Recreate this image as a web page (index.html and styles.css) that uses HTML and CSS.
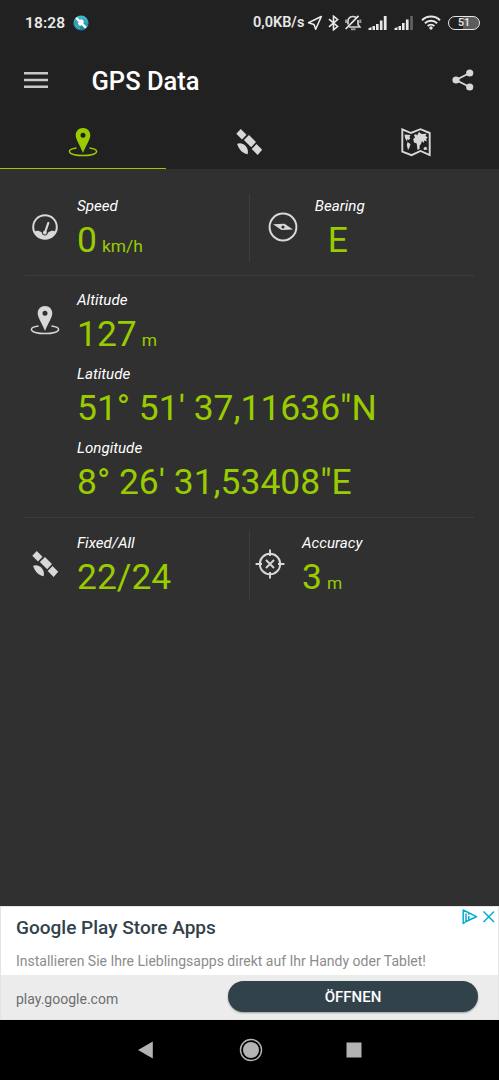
FILE: index.html
```html
<!DOCTYPE html>
<html lang="de">

<head>
    <meta charset="UTF-8">
    <meta name="viewport" content="width=device-width, initial-scale=1.0">
    <title>GPS Data</title>
    <link rel="stylesheet" href="styles.css">
</head>

<body>
    <!-- shared icons -->
    <svg class="defs">
        <symbol id="pin" viewBox="0 0 30 30">
            <path fill="currentColor" fill-rule="evenodd" d="M15 1C10.700 1 7.700 4.200 7.700 8.200C7.700 12.500 12.200 18.500 15 26C17.800 18.500 22.300 12.500 22.300 8.200C22.300 4.200 19.300 1 15 1ZM15 5.700a2.500 2.500 0 1 1 0 5a2.500 2.500 0 1 1 0-5Z" />
            <path fill="none" stroke="currentColor" stroke-width="1.500" d="M8.500 21C4 21.600 1.400 22.900 1.400 24.500C1.400 26.900 7.500 28.600 15 28.600S28.600 26.900 28.600 24.500C28.600 22.900 26 21.600 21.500 21" />
        </symbol>
        <symbol id="satellite" viewBox="0 0 30 30">
            <g fill="currentColor">
                <path d="M6.800 2L12.500 7.700L8 12.500L2.300 6.700ZM15 7.900L22 15L17.200 20.200L9.900 13ZM22.500 16.900L28.200 22.700L23.600 27.900L17.700 22Z" />
                <path d="M3.200 16.800C6 15.600 9.200 16.300 11.500 18.800C13.700 21.200 14.500 24.300 13.600 27.300C10.800 26.800 8.300 25.300 6.600 23.300C5 21.400 3.700 19.200 3.200 16.800Z" />
            </g>
        </symbol>
    </svg>

    <div class="statusbar">
        <span class="clock">18:28</span>
        <svg class="app-badge" width="16" height="16" viewBox="0 0 16 16">
            <defs>
                <linearGradient id="sky" x1="0" y1="0" x2="0" y2="1">
                    <stop offset="0" stop-color="#43bfd3" />
                    <stop offset="1" stop-color="#197b96" />
                </linearGradient>
            </defs>
            <circle cx="8" cy="8" r="7.600" fill="url(#sky)" />
            <path fill="#fff" d="M2.300 3.500L4 1.900L7 5L8.500 4L11 6.600L10.200 8.200L13.800 11.800L12 13.500L8.500 10L7 11L4.700 8.700L5.600 7Z" />
            <path fill="none" stroke="#8fd0dc" stroke-width=".6" d="M3 9.500C3 12 5 13.500 7 13.500M4.500 10C4.700 11 5.500 12 6.500 12" />
        </svg>
        <span class="rate">0,0KB/s</span>
        <svg class="i-nav" width="16" height="16" viewBox="0 0 16 16">
            <path fill="none" stroke="#e8e8e8" stroke-width="1.600" stroke-linejoin="round" d="M14.300 1.500L1.500 7.700L7 9.500L8.700 14.300Z" />
        </svg>
        <svg class="i-bt" width="11" height="16" viewBox="0 0 11 16">
            <path fill="none" stroke="#e8e8e8" stroke-width="1.600" d="M1 4.200L9.600 11.500L5.500 14.800V1.200L9.600 4.500L1 11.800" />
        </svg>
        <svg class="i-bell" width="18" height="16" viewBox="0 0 18 16">
            <path fill="none" stroke="#d8d8d8" stroke-width="1.700" d="M4 9.500V6C4 3 6.500 1.500 9 1.500C10 1.500 11 1.800 12 2.500M14 5V9.500L15.800 12H5" />
            <path fill="none" stroke="#999" stroke-width="2" d="M2 4.500V8M16.300 4.500V8M7 14.300H11.500" />
            <path stroke="#e8e8e8" stroke-width="1.700" d="M1.700 14L14.500 .8" />
        </svg>
        <svg class="i-sig" width="20" height="14" viewBox="0 0 20 14">
            <path fill="#e8e8e8" d="M.5 14v-1.700l3-1.300V14ZM4.500 10h2.500V14H4.500ZM8 8h2.600V14H8ZM11.900 4.500h2.600v9.500H11.900ZM15.800 0h2.800v14h-2.800Z" />
        </svg>
        <svg class="i-sig2" width="20" height="14" viewBox="0 0 20 14">
            <path fill="#e8e8e8" d="M.5 14v-1.700l3-1.300V14ZM4.500 10h2.500V14H4.500ZM8 7h2.600V14H8ZM11.900 3.500h2.700v10.500H11.900Z" />
            <path fill="#666" d="M16.300 0h2.500v14h-2.500Z" />
        </svg>
        <svg class="i-wifi" width="20" height="15" viewBox="0 0 20 15">
            <path fill="none" stroke="#e8e8e8" stroke-width="2" d="M1 5.200C6 .2 14 .2 19 5.200M3.900 8.200C7.300 4.900 12.700 4.900 16.100 8.200M6.700 11C8.600 9.200 11.400 9.200 13.300 11" />
            <circle cx="10" cy="13" r="1.700" fill="#e8e8e8" />
        </svg>
        <span class="battery">51</span>
    </div>

    <header class="toolbar">
        <svg width="24" height="17" viewBox="0 0 24 17">
            <path stroke="#c8c8c8" stroke-width="2.400" d="M0 1.200H24M0 8H24M0 14.800H24" />
        </svg>
        <h1>GPS Data</h1>
        <svg class="share" width="22" height="22" viewBox="0 0 22 22">
            <path fill="none" stroke="#d6d6d6" stroke-width="1.900" d="M17.700 4L4 11L17.700 18" />
            <g fill="#d6d6d6">
                <circle cx="4" cy="11" r="3.600" />
                <circle cx="17.700" cy="4" r="3.600" />
                <circle cx="17.700" cy="18" r="3.600" />
            </g>
        </svg>
    </header>

    <nav class="tabs">
        <div class="tab active"><svg class="icon"><use href="#pin" /></svg></div>
        <div class="tab"><svg class="icon"><use href="#satellite" /></svg></div>
        <div class="tab">
            <svg class="icon" viewBox="0 0 30 30">
                <path fill="none" stroke="currentColor" stroke-width="1.900" d="M1.300 2.300L10 6L19.500 2.200L28.700 6V28L19.500 24L10.500 28.200L1.300 24.600Z" />
                <path fill="currentColor" d="M3.500 7.500L9.500 8L8.500 10L9.300 11.500L7.500 13L6.500 12L6 14.500L4 11ZM6.500 15L9.500 17L8.500 20.500L7 23L5.800 18Z" />
                <path fill="currentColor" d="M13 8L15 7L16 8.500L18 5L20.500 7L25.500 6.700L24.500 9L26.800 10.500L25 12L26 14.500L23.500 13.500L22.500 16L21 14L20 17L18.700 18.500L18.500 22L16.500 23L15.700 16.500L13 15.500L12.200 12L14 10.500ZM22.500 21L25 19.500L26.500 22.500L23 23Z" />
            </svg>
        </div>
    </nav>

    <main class="content">
        <section class="row split">
            <div class="cell">
                <svg class="icon" viewBox="0 0 30 30">
                    <circle cx="15" cy="15" r="11.800" fill="none" stroke="currentColor" stroke-width="2" />
                    <path fill="currentColor" d="M4.500 19.500C7 18 9 18.500 12 20.500H18C21 18.500 23 18 25.500 19.500C23.500 25 19.500 27 15 27S6.500 25 4.500 19.500Z" />
                    <path stroke="#303030" stroke-width="6" stroke-linecap="round" d="M14.900 20.500L16.300 16.500" />
                    <path stroke="currentColor" stroke-width="2.200" stroke-linecap="round" d="M15 20.500L18.300 11" />
                    <circle cx="14.800" cy="20.700" r="1.900" fill="currentColor" />
                </svg>
                <div class="data">
                    <p class="label">Speed</p>
                    <p class="value">0<small>km/h</small></p>
                </div>
            </div>
            <div class="cell bearing">
                <svg class="icon" viewBox="0 0 30 30">
                    <circle cx="15" cy="15" r="13.400" fill="none" stroke="currentColor" stroke-width="2" />
                    <path fill="currentColor" d="M5 12.300L16.500 11.800L25 17.500L13.500 18Z" />
                    <circle cx="15" cy="15" r="1.600" fill="#303030" />
                </svg>
                <div class="data">
                    <p class="label">Bearing</p>
                    <p class="value">E</p>
                </div>
            </div>
        </section>

        <section class="row position">
            <svg class="icon"><use href="#pin" /></svg>
            <div class="data">
                <p class="label">Altitude</p>
                <p class="value">127<small>m</small></p>
                <p class="label">Latitude</p>
                <p class="value">51° 51' 37,11636"N</p>
                <p class="label">Longitude</p>
                <p class="value">8° 26' 31,53408"E</p>
            </div>
        </section>

        <section class="row split">
            <div class="cell">
                <svg class="icon"><use href="#satellite" /></svg>
                <div class="data">
                    <p class="label">Fixed/All</p>
                    <p class="value">22/24</p>
                </div>
            </div>
            <div class="cell accuracy">
                <svg class="icon" viewBox="0 0 30 30">
                    <g fill="none" stroke="currentColor" stroke-width="1.900">
                        <circle cx="15" cy="15" r="10.200" />
                        <path d="M15 .6V7M15 23V29.400M.6 15H7M23 15H29.400M11 11L19 19M19 11L11 19" />
                    </g>
                </svg>
                <div class="data">
                    <p class="label">Accuracy</p>
                    <p class="value">3<small>m</small></p>
                </div>
            </div>
        </section>
    </main>

    <aside class="ad">
        <div class="ad-text">
            <h2>Google Play Store Apps</h2>
            <p>Installieren Sie Ihre Lieblingsapps direkt auf Ihr Handy oder Tablet!</p>
            <svg class="ad-choices" width="34" height="16" viewBox="0 0 34 16">
                <g fill="none" stroke="#00aecd" stroke-width="1.500">
                    <path stroke-linejoin="round" d="M4 12.500L1.200 14.500V1L14.500 7.700L4 12.500V4.500" />
                    <path d="M6.800 7V11M6.800 4.200V5.700M21.500 2.500L32 13M32 2.500L21.500 13" />
                </g>
            </svg>
        </div>
        <div class="ad-action">
            <span>play.google.com</span>
            <button>ÖFFNEN</button>
        </div>
    </aside>

    <footer class="navbar">
        <svg width="16" height="18" viewBox="0 0 16 18"><path fill="#b4b4b4" d="M15.800 .5V17.500L1 9Z" /></svg>
        <svg class="home" width="24" height="24" viewBox="0 0 24 24">
            <circle cx="12" cy="12" r="10.500" fill="none" stroke="#b4b4b4" stroke-width="1.400" />
            <circle cx="12" cy="12" r="8" fill="#b4b4b4" />
        </svg>
        <svg width="16" height="16" viewBox="0 0 16 16"><path fill="#b4b4b4" d="M.5 .5h15v15H.5Z" /></svg>
    </footer>
</body>

</html>
```
FILE: styles.css
```css
* {
    box-sizing: border-box;
    margin: 0;
    padding: 0;
}

body {
    width: 499px;
    height: 1080px;
    display: flex;
    flex-direction: column;
    background: #303030;
    color: #fff;
    font-family: Roboto, "Liberation Sans", sans-serif;
    overflow: hidden;
}

svg {
    display: block;
    flex-shrink: 0;
}

.defs {
    position: absolute;
    width: 0;
    height: 0;
}

.icon {
    width: 30px;
    height: 30px;
    color: #d8d8d8;
}

/* status bar */
.statusbar {
    height: 45px;
    display: flex;
    align-items: center;
    padding-left: 25px;
    background: #212121;
    color: #e8e8e8;
    font-size: 15.5px;
    font-weight: 600;
    white-space: nowrap;
}

.clock {
    width: 48px;
    letter-spacing: .1px;
}

.rate {
    width: 53px;
    margin-left: 164px;
    font-size: 14.5px;
    line-height: 20px;
}

.i-nav {
    margin-left: 1px;
}

.i-bt {
    margin-left: 5px;
}

.i-bell {
    margin-left: 5px;
}

.i-sig {
    margin-left: 6px;
}

.i-sig2 {
    margin-left: 6px;
}

.i-wifi {
    margin-left: 7px;
}

.battery {
    width: 32px;
    height: 14px;
    margin-left: 7px;
    border: 1.5px solid #e8e8e8;
    border-radius: 7px;
    background: linear-gradient(90deg, #212121 45%, #5c5c5c 45%);
    font-size: 10.5px;
    line-height: 12px;
    text-align: center;
}

/* title bar */
.toolbar {
    height: 70px;
    display: flex;
    align-items: center;
    padding: 0 25px 0 24px;
    background: #212121;
}

.toolbar h1 {
    margin-left: 43.5px;
    padding-top: 2px;
    font-size: 25.5px;
    font-weight: 500;
    line-height: 30px;
}

.toolbar .share {
    margin-left: auto;
}

/* tabs */
.tabs {
    height: 54px;
    display: flex;
    background: #212121;
}

.tab {
    flex: 1;
    display: flex;
    justify-content: center;
    padding-top: 12px;
    border-bottom: 1px solid transparent;
}

.tab.active {
    border-color: #99cc00;
}

.tab.active .icon {
    color: #99cc00;
}

/* values */
.content {
    flex: 1;
    padding: 0 25px;
}

.row {
    display: flex;
    border-bottom: 1px solid #3d3d3d;
}

.row:last-child {
    border-bottom: 0;
}

.split {
    padding: 25px 0 13px;
}

.split:last-child {
    padding-top: 13px;
}

.cell {
    width: 224px;
    height: 68px;
    display: flex;
    padding: 2.5px 0 0 4.7px;
}

.cell .icon {
    margin-top: 15px;
}

.cell + .cell {
    border-left: 1px solid #3d3d3d;
}

.data {
    margin-left: 17.3px;
    white-space: nowrap;
}

.label {
    font-size: 15.15px;
    font-style: italic;
    line-height: 18px;
}

.value {
    color: #99cc00;
    font-size: 35.45px;
    line-height: 51px;
}

.value small {
    margin-left: 5px;
    font-size: 17.4px;
    line-height: 1;
}

.cell.bearing {
    padding-left: 17.5px;
}

.bearing .data {
    text-align: center;
}

.bearing .value {
    padding-right: 4px;
}

.position {
    height: 242px;
    padding: 14.500px 0 0 4.7px;
}

.position .icon {
    margin-top: 14.500px;
}

.position .value {
    margin-bottom: 5.3px;
}

/* ad banner */
.ad {
    height: 114px;
    border: 1px solid #e4e4e4;
    background: #fff;
}

.ad-text {
    position: relative;
    height: 68px;
    padding: 8px 0 0 15px;
    white-space: nowrap;
}

.ad h2 {
    color: #32424a;
    font-size: 19.05px;
    font-weight: 500;
    line-height: 26px;
}

.ad p {
    margin-top: 11px;
    color: #8c8c8c;
    font-size: 14px;
    line-height: 18px;
}

.ad-choices {
    position: absolute;
    top: 2px;
    right: 2px;
}

.ad-action {
    height: 44px;
    display: flex;
    justify-content: space-between;
    padding: 6px 20px 0 15px;
    background: #ececec;
    color: #6e6e6e;
    font-size: 14px;
    line-height: 36px;
}

.ad button {
    width: 250px;
    height: 31px;
    border: 0;
    border-radius: 16px;
    background: #32424a;
    box-shadow: 0 1px 2px rgba(0, 0, 0, .35);
    color: #fff;
    font: 500 15px Roboto, sans-serif;
}

/* system navigation */
.navbar {
    height: 60px;
    display: flex;
    align-items: center;
    justify-content: space-between;
    padding: 0 137px;
    background: #000;
}

.navbar .home {
    margin-left: 2px;
}
```
